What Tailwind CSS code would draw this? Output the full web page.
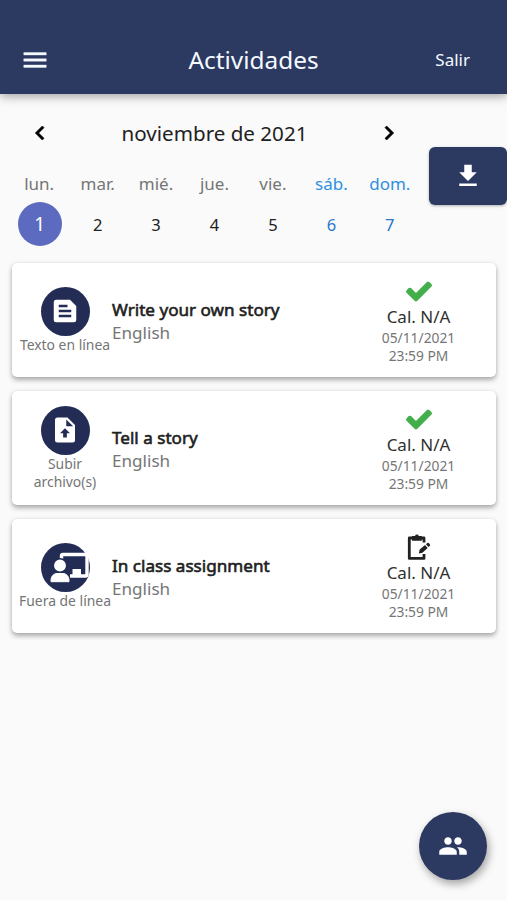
<!DOCTYPE html>
<html lang="es">
<head>
<meta charset="utf-8">
<meta name="viewport" content="width=device-width, initial-scale=1">
<title>Actividades</title>
<script src="https://cdn.jsdelivr.net/npm/@tailwindcss/browser@4"></script>
</head>
<body class="bg-[#fafafa] font-['Noto_Sans',sans-serif] text-[#212121]">
<div class="relative flex h-[900px] w-[507px] flex-col overflow-hidden">
  <header class="grid h-[94px] shrink-0 grid-cols-[1fr_auto_1fr] items-center bg-[#2c3960] pt-[26px] text-[#f5faff] shadow-[0_2px_10px_rgba(0,0,0,0.38)]">
    <svg class="ml-[20px] h-[30px] w-[30px]" viewBox="0 0 24 24" fill="currentColor" stroke="currentColor" stroke-width="0.300"><path d="M3 18h18v-2H3v2zm0-5h18v-2H3v2zm0-7v2h18V6H3z"/></svg>
    <h1 class="text-[24.4px] leading-[32px]">Actividades</h1>
    <span class="mr-[37px] justify-self-end text-[17px] leading-[24px]">Salir</span>
  </header>

  <section class="flex h-[169px] shrink-0">
    <div class="ml-[10px] w-[409px] pt-[24px]">
      <div class="flex h-[30px] items-center justify-between px-[16px]">
        <svg class="h-[28px] w-[28px] text-black" viewBox="0 0 24 24" fill="currentColor" stroke="currentColor" stroke-width="0.600"><path d="M15.41 16.58L10.83 12l4.58-4.59L14 6l-6 6 6 6z"/></svg>
        <span class="text-[20.6px] leading-[30px]">noviembre de 2021</span>
        <svg class="h-[28px] w-[28px] text-black" viewBox="0 0 24 24" fill="currentColor" stroke="currentColor" stroke-width="0.600"><path d="M8.59 16.58L13.17 12 8.59 7.41 10 6l6 6-6 6z"/></svg>
      </div>
      <div class="mt-[24px] grid grid-cols-7 text-center text-[17px] leading-[24px] text-[#757575]">
        <span>lun.</span><span>mar.</span><span>mié.</span><span>jue.</span><span>vie.</span><span class="text-[#2f8fe0]">sáb.</span><span class="text-[#2f8fe0]">dom.</span>
      </div>
      <div class="mt-[6px] grid grid-cols-7 place-items-center text-[16.5px] leading-[24px]">
        <span class="ml-px flex h-[44px] w-[44px] items-center justify-center rounded-full bg-[#5c6bc0] text-[19px] text-white">1</span><span class="pt-px">2</span><span class="pt-px">3</span><span class="pt-px">4</span><span class="pt-px">5</span><span class="pt-px text-[#2878cc]">6</span><span class="pt-px text-[#2878cc]">7</span>
      </div>
    </div>
    <div class="mt-[53px] ml-[10px] flex h-[58px] w-[78px] items-center justify-center rounded-[6px] bg-[#2c3960] text-white shadow-[0_1px_3px_rgba(0,0,0,0.3)]">
      <svg class="h-[30px] w-[30px]" viewBox="0 0 24 24" fill="currentColor"><path d="M19 9h-4V3H9v6H5l7 7 7-7zM5 18v2h14v-2H5z"/></svg>
    </div>
  </section>

  <main class="flex flex-col gap-[14px] pr-[11px] pl-[12px]">
    <article class="flex h-[114px] items-center rounded-[5px] bg-white shadow-[0_3px_5px_rgba(0,0,0,0.3),0_0_4px_rgba(0,0,0,0.08)]">
      <div class="flex w-[106px] flex-col items-center text-center text-[13.9px] leading-[18px] text-[#757575]">
        <div class="flex h-[49px] w-[49px] items-center justify-center rounded-full bg-[#222c55] text-white">
          <svg class="h-[30px] w-[30px]" viewBox="0 0 24 24" fill="currentColor"><path d="M16 3H5a2 2 0 0 0-2 2v14a2 2 0 0 0 2 2h14a2 2 0 0 0 2-2V8l-5-5zM7 7h7v2H7V7zm10 10H7v-2h10v2zm0-4H7v-2h10v2z"/></svg>
        </div>
        <span class="whitespace-nowrap">Texto en línea</span>
      </div>
      <div class="-ml-[6px] flex-1 pt-[1px] text-[17.1px] leading-[23px]">
        <h2 class="[-webkit-text-stroke:0.6px_#212121]">Write your own story</h2>
        <p class="text-[#757575]">English</p>
      </div>
      <div class="flex w-[155px] flex-col items-center pt-[2px] text-[13.800px] leading-[18px] text-[#757575]">
        <svg class="-my-[2px] h-[30px] w-[30px] text-[#43ae4c]" viewBox="0 0 1792 1792" fill="currentColor"><path d="M1671 566q0 40-28 68l-724 724-136 136q-28 28-68 28t-68-28l-136-136-362-362q-28-28-28-68t28-68l136-136q28-28 68-28t68 28l294 295 656-657q28-28 68-28t68 28l136 136q28 28 28 68z"/></svg>
        <span class="text-[17px] leading-[25px] text-[#303030]">Cal. N/A</span>
        <span>05/11/2021</span><span>23:59 PM</span>
      </div>
    </article>

    <article class="flex h-[114px] items-center rounded-[5px] bg-white shadow-[0_3px_5px_rgba(0,0,0,0.3),0_0_4px_rgba(0,0,0,0.08)]">
      <div class="flex w-[106px] flex-col items-center text-center text-[13.9px] leading-[18px] text-[#757575]">
        <div class="flex h-[49px] w-[49px] items-center justify-center rounded-full bg-[#222c55] text-white">
          <svg class="h-[30px] w-[30px]" viewBox="0 0 24 24" fill="currentColor"><path d="M14 2H6a2 2 0 0 0-2 2v16a2 2 0 0 0 2 2h12a2 2 0 0 0 2-2V8l-6-6zm-.5 12.500v3.500h-3v-3.500H8L12 10.500l4 4zM13 9V3.500L18.500 9H13z" fill-rule="evenodd"/></svg>
        </div>
        <span>Subir<br>archivo(s)</span>
      </div>
      <div class="-ml-[6px] flex-1 pt-[1px] text-[17.1px] leading-[23px]">
        <h2 class="[-webkit-text-stroke:0.6px_#212121]">Tell a story</h2>
        <p class="text-[#757575]">English</p>
      </div>
      <div class="flex w-[155px] flex-col items-center pt-[2px] text-[13.800px] leading-[18px] text-[#757575]">
        <svg class="-my-[2px] h-[30px] w-[30px] text-[#43ae4c]" viewBox="0 0 1792 1792" fill="currentColor"><path d="M1671 566q0 40-28 68l-724 724-136 136q-28 28-68 28t-68-28l-136-136-362-362q-28-28-28-68t28-68l136-136q28-28 68-28t68 28l294 295 656-657q28-28 68-28t68 28l136 136q28 28 28 68z"/></svg>
        <span class="text-[17px] leading-[25px] text-[#303030]">Cal. N/A</span>
        <span>05/11/2021</span><span>23:59 PM</span>
      </div>
    </article>

    <article class="flex h-[114px] items-center rounded-[5px] bg-white shadow-[0_3px_5px_rgba(0,0,0,0.3),0_0_4px_rgba(0,0,0,0.08)]">
      <div class="flex w-[106px] flex-col items-center text-center text-[13.9px] leading-[18px] text-[#757575]">
        <svg class="h-[49px] w-[49px]" viewBox="0 0 49 49">
          <circle cx="24.500" cy="24.500" r="24.500" fill="#222c55"/>
          <path d="M20.500 16v-3q0-1.500 1.500-1.500h22.500q1.500 0 1.500 1.500v18.500q0 1.500-1.500 1.500H29" fill="none" stroke="#fff" stroke-width="3.400"/>
          <path d="M31.500 26h8.500v7h-8.500z" fill="#fff"/>
          <circle cx="19" cy="22.500" r="6.700" fill="#fff" stroke="#222c55" stroke-width="1.500"/>
          <path d="M10 38.700v-1.200c0-4.500 3-7 6-7h6c3 0 6 2.500 6 7v1.200z" fill="#fff" stroke="#fff" stroke-width="1" stroke-linejoin="round"/>
        </svg>
        <span class="whitespace-nowrap">Fuera de línea</span>
      </div>
      <div class="-ml-[6px] flex-1 pt-[1px] text-[17.1px] leading-[23px]">
        <h2 class="[-webkit-text-stroke:0.6px_#212121]">In class assignment</h2>
        <p class="text-[#757575]">English</p>
      </div>
      <div class="flex w-[155px] flex-col items-center pt-[2px] text-[13.800px] leading-[18px] text-[#757575]">
        <svg class="h-[26px] w-[26px] text-[#212121]" viewBox="0 0 26 26">
          <path d="M18 8.500V4H3.300v20.400H18V20" fill="none" stroke="currentColor" stroke-width="2.800" stroke-linejoin="round"/>
          <path d="M6 2h3a2 2 0 0 1 3.800 0h3v4.800H6z" fill="currentColor"/>
          <path d="M12.800 19.600l.9-4 5.300-4.600 2.700 3.100-5.300 4.600z M19.900 10.200l1.500-1.300q.8-.5 1.400.1l1.200 1.400q.5.800-.1 1.400l-1.400 1.300z" fill="currentColor"/>
        </svg>
        <span class="text-[17px] leading-[25px] text-[#303030]">Cal. N/A</span>
        <span>05/11/2021</span><span>23:59 PM</span>
      </div>
    </article>
  </main>

  <div class="absolute right-[20px] bottom-[20px] flex h-[68px] w-[68px] items-center justify-center rounded-full bg-[#2c3960] text-white shadow-[2px_4px_9px_rgba(0,0,0,0.35)]">
    <svg class="h-[30px] w-[30px]" viewBox="0 0 24 24" fill="currentColor"><path d="M16 11c1.660 0 2.990-1.340 2.990-3S17.660 5 16 5s-3 1.340-3 3 1.340 3 3 3zm-8 0c1.660 0 2.990-1.340 2.990-3S9.660 5 8 5 5 6.340 5 8s1.340 3 3 3zm0 2c-2.330 0-7 1.170-7 3.500V19h14v-2.500c0-2.330-4.670-3.500-7-3.500zm8 0c-.290 0-.620.020-.970.050 1.160.840 1.970 1.970 1.970 3.450V19h6v-2.500c0-2.330-4.670-3.500-7-3.500z"/></svg>
  </div>
</div>
</body>
</html>
